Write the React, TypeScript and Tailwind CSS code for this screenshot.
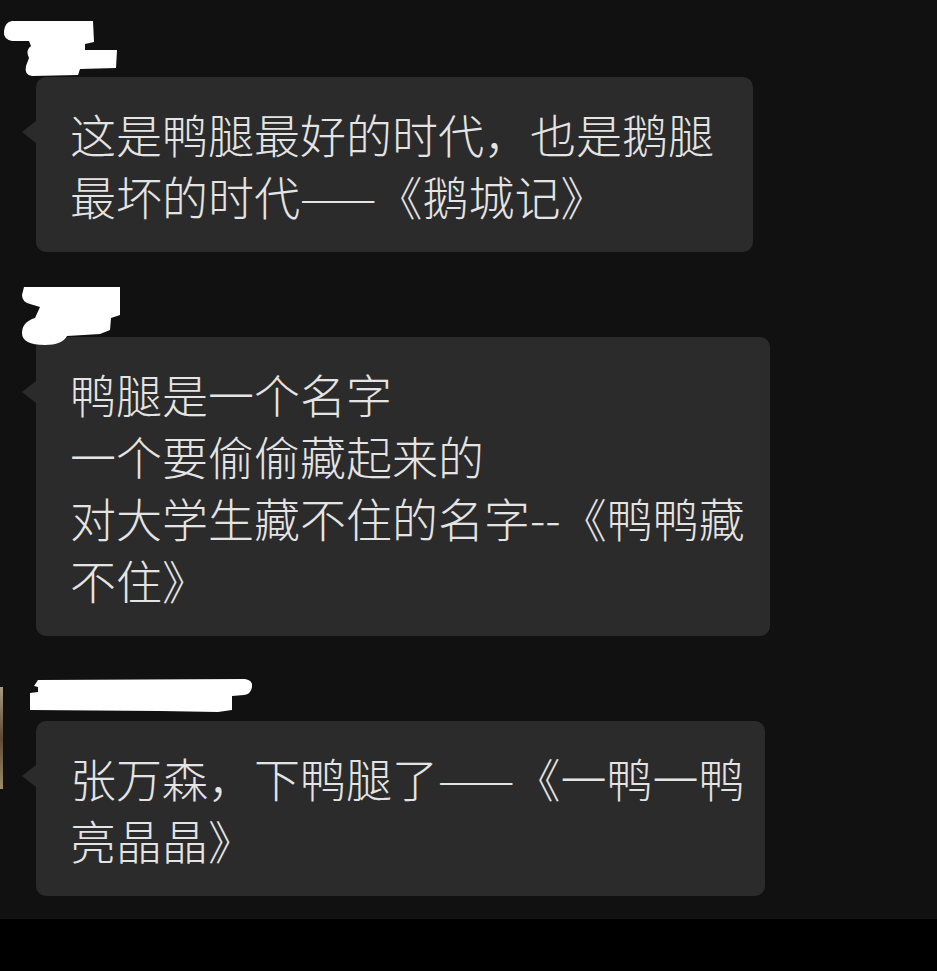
import React from 'react';

type Msg = {
  lines: string[];
  width: string;
  blob: React.ReactNode;
  avatar?: boolean;
};

const blobs = {
  one: (
    <svg className="relative z-10 block" width="130" height="77" viewBox="0 0 130 77">
      <path
        d="M12 21 L93 21 L94 42 L85 44 L85 50 L117 50 L116 68 L80 69 L78 75 L32 76 Q24 75 26 66 L29 58 Q25 50 31 46 L29 41 L12 41 Q3 39 4 31 Q5 22 12 21 Z"
        fill="#ffffff"
      />
    </svg>
  ),
  two: (
    <svg className="relative z-10 block overflow-visible" width="130" height="77" viewBox="0 0 130 77">
      <path
        d="M24 27 L120 27 L120 55 L111 58 L110 70 L100 74 L67 76 Q62 85 45 85 Q22 85 22 73 Q22 62 35 58 L40 47 L30 44 Q22 42 22 35 Z"
        fill="#ffffff"
      />
    </svg>
  ),
  three: (
    <svg className="relative z-10 block" width="260" height="77" viewBox="0 0 260 77">
      <path
        d="M38 36 L245 35 Q253 36 252 43 Q251 50 244 51 L232 52 L232 66 L218 68 L160 67 L30 66 L30 49 L38 48 L38 43 L34 42 Z"
        fill="#ffffff"
      />
    </svg>
  ),
};

const messages: Msg[] = [
  {
    lines: ['这是鸭腿最好的时代，也是鹅腿', '最坏的时代——《鹅城记》'],
    width: 'w-[717px]',
    blob: blobs.one,
  },
  {
    lines: ['鸭腿是一个名字', '一个要偷偷藏起来的', '对大学生藏不住的名字--《鸭鸭藏', '不住》'],
    width: 'w-[734px]',
    blob: blobs.two,
  },
  {
    lines: ['张万森，下鸭腿了——《一鸭一鸭', '亮晶晶》'],
    width: 'w-[729px]',
    blob: blobs.three,
    avatar: true,
  },
];

const Bubble: React.FC<{ msg: Msg }> = ({ msg }) => (
  <div className="relative">
    {msg.avatar && (
      <div className="absolute left-0 top-[43px] h-[102px] w-[3px] bg-gradient-to-b from-[#a89e86] via-[#5e4a36] to-[#9a8c6c]" />
    )}
    <div className="h-[77px]">{msg.blob}</div>
    <div
      className={`relative ml-[36px] ${msg.width} rounded-[10px] bg-[#2b2b2b] pl-[34px] pr-[20px] pt-[25px] pb-[26px]`}
    >
      <span className="absolute left-[-14px] top-[44px] h-0 w-0 border-y-[11px] border-r-[14px] border-y-transparent border-r-[#2b2b2b]" />
      {msg.lines.map((line, i) => (
        <div key={i} className="whitespace-nowrap text-[46px] font-light leading-[62px] text-[#e4e4e4]">
          {line}
        </div>
      ))}
    </div>
  </div>
);

export default function App() {
  return (
    <div
      className="flex h-[971px] w-[937px] flex-col overflow-hidden bg-black"
      style={{ fontFamily: '"Noto Sans CJK SC", "Noto Sans", sans-serif' }}
    >
      <div className="flex h-[919px] flex-col gap-[8px] bg-[#111111]">
        {messages.map((m, i) => (
          <Bubble key={i} msg={m} />
        ))}
      </div>
    </div>
  );
}
